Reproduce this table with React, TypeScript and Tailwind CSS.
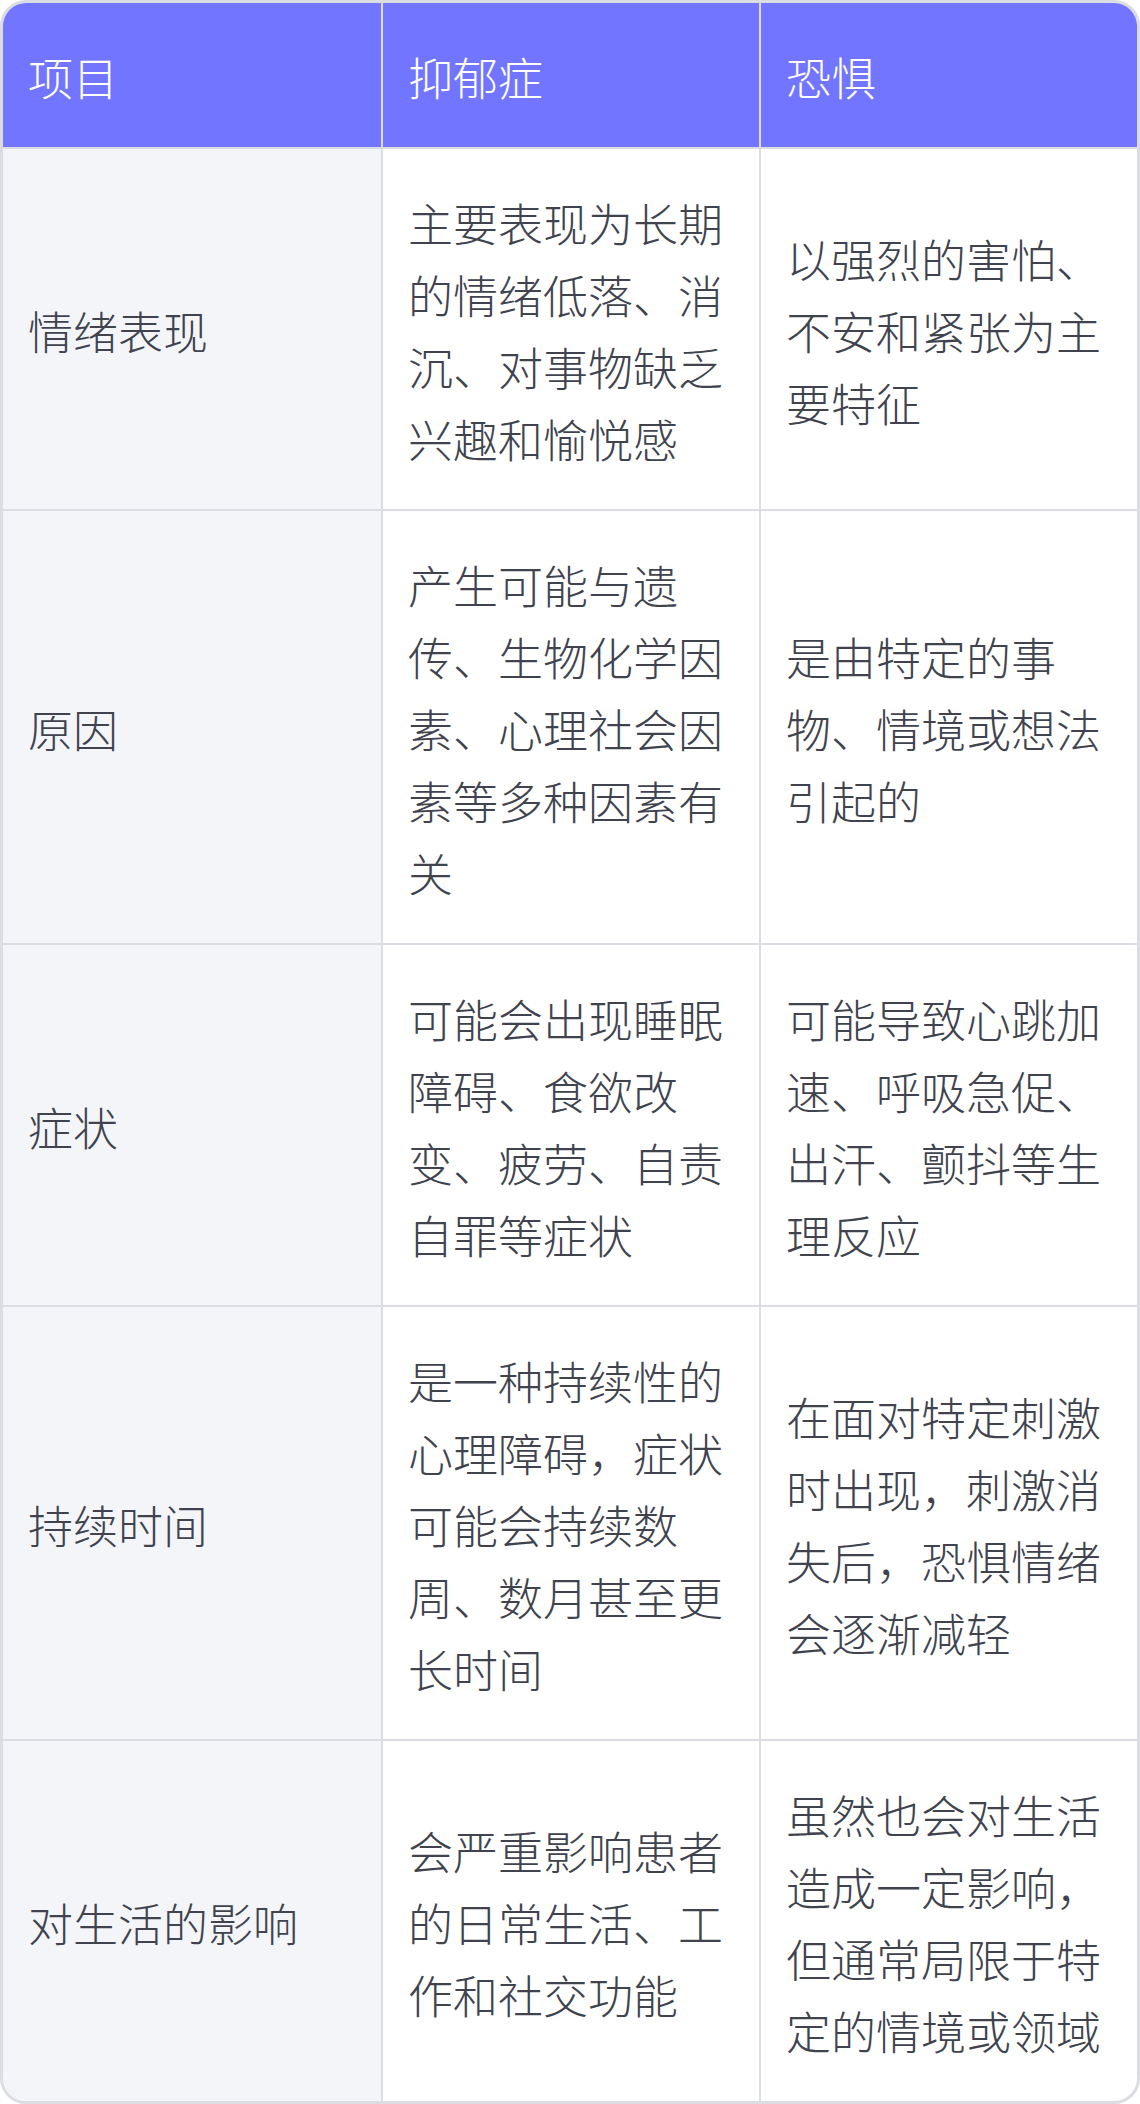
const header = ["项目", "抑郁症", "恐惧"];

const rows = [
  {
    item: "情绪表现",
    depression: "主要表现为长期的情绪低落、消沉、对事物缺乏兴趣和愉悦感",
    fear: "以强烈的害怕、不安和紧张为主要特征",
  },
  {
    item: "原因",
    depression: "产生可能与遗传、生物化学因素、心理社会因素等多种因素有关",
    fear: "是由特定的事物、情境或想法引起的",
  },
  {
    item: "症状",
    depression: "可能会出现睡眠障碍、食欲改变、疲劳、自责自罪等症状",
    fear: "可能导致心跳加速、呼吸急促、出汗、颤抖等生理反应",
  },
  {
    item: "持续时间",
    depression: "是一种持续性的心理障碍，症状可能会持续数周、数月甚至更长时间",
    fear: "在面对特定刺激时出现，刺激消失后，恐惧情绪会逐渐减轻",
  },
  {
    item: "对生活的影响",
    depression: "会严重影响患者的日常生活、工作和社交功能",
    fear: "虽然也会对生活造成一定影响，但通常局限于特定的情境或领域",
  },
];

export default function App() {
  return (
    <div
      className="w-[1140px] bg-white text-[45px] font-light leading-[72px] text-[#40434e]"
      style={{ fontFamily: '"Noto Sans CJK SC", "Noto Sans", sans-serif' }}
    >
      <div className="overflow-hidden rounded-[26px] border-[3px] border-[#dcdde2]">
        <div className="grid grid-cols-3 bg-[#7175ff] text-white">
          {header.map((h, i) => (
            <div
              key={h}
              className={
                i === 0
                  ? "px-[25px] pt-[38px] pb-[34px]"
                  : "border-l-2 border-[#dcdde2] px-[25px] pt-[38px] pb-[34px]"
              }
            >
              {h}
            </div>
          ))}
        </div>
        {rows.map((r) => (
          <div key={r.item} className="grid grid-cols-3 border-t-2 border-[#dcdde2]">
            <div className="flex items-center bg-[#f4f5f9] px-[25px] pt-[38px] pb-[34px]">
              {r.item}
            </div>
            <div className="flex items-center border-l-2 border-[#dcdde2] px-[25px] pt-[38px] pb-[34px]">
              <p>{r.depression}</p>
            </div>
            <div className="flex items-center border-l-2 border-[#dcdde2] px-[25px] pt-[38px] pb-[34px]">
              <p>{r.fear}</p>
            </div>
          </div>
        ))}
      </div>
    </div>
  );
}
